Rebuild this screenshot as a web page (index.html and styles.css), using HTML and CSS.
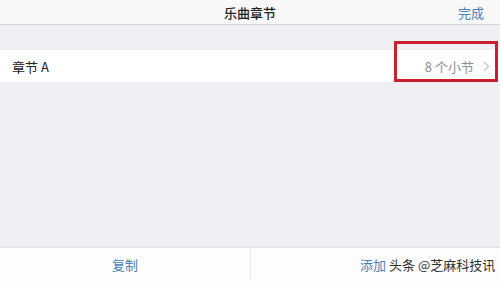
FILE: index.html
```html
<!DOCTYPE html>
<html lang="zh">
<head>
<meta charset="utf-8">
<link rel="stylesheet" href="styles.css">
</head>
<body>
<div class="app">
  <header class="nav">
    <span class="nav-title">乐曲章节</span>
    <span class="nav-done">完成</span>
  </header>
  <main class="content">
    <div class="row">
      <span class="row-label">章节 A</span>
      <span class="row-detail">8 个小节<svg class="chev" width="7" height="11" viewBox="0 0 7 11"><path d="M1 1 L5.5 5.5 L1 10" fill="none" stroke="#c4c4c9" stroke-width="1.3"/></svg></span>
      <span class="highlight"></span>
    </div>
  </main>
  <footer class="toolbar">
    <div class="tool">复制</div>
    <div class="tool tool-right"><span class="add">添加</span><span class="watermark">头条 @芝麻科技讯</span></div>
  </footer>
</div>
</body>
</html>
```
FILE: styles.css
```css
* { box-sizing: border-box; }
html, body { margin: 0; padding: 0; }
body {
  width: 500px;
  height: 281px;
  overflow: hidden;
  font-family: "Noto Sans CJK SC", "Liberation Sans", sans-serif;
  background: #efeff4;
}
.app {
  display: flex;
  flex-direction: column;
  height: 281px;
}
.nav {
  position: relative;
  height: 25px;
  background: #f8f8f9;
  border-bottom: 1px solid #d6d6da;
  display: flex;
  align-items: center;
  justify-content: center;
}
.nav-title {
  font-size: 13px;
  font-weight: 500;
  color: #222;
}
.nav-done {
  position: absolute;
  right: 16px;
  top: 3px;
  font-size: 13px;
  color: #4b80b8;
}
.content {
  flex: 1;
  padding-top: 25px;
}
.row {
  position: relative;
  height: 32px;
  background: #fff;
  display: flex;
  align-items: center;
  justify-content: space-between;
  padding: 0 10px 0 12px;
}
.row-label {
  font-size: 13px;
  color: #222;
}
.row-detail {
  font-size: 13px;
  color: #8e8e93;
  display: flex;
  align-items: center;
  gap: 9px;
}
.chev { display: block; }
.highlight {
  position: absolute;
  left: 394px;
  top: -9px;
  width: 104px;
  height: 41px;
  border: 3px solid #c9202d;
}
.toolbar {
  height: 34px;
  background: #fdfdfd;
  border-top: 1px solid #e4e4e8;
  display: grid;
  grid-template-columns: 1fr 1fr;
}
.tool {
  min-width: 0;
  display: flex;
  align-items: center;
  justify-content: center;
  font-size: 13px;
  color: #4b80b8;
  white-space: nowrap;
}
.tool-right {
  border-left: 1px solid #e8e8ec;
  justify-content: flex-start;
  padding-left: 109px;
}
.add { color: #4b80b8; }
.watermark {
  margin-left: 3px;
  color: #333;
  font-size: 13px;
}
```
